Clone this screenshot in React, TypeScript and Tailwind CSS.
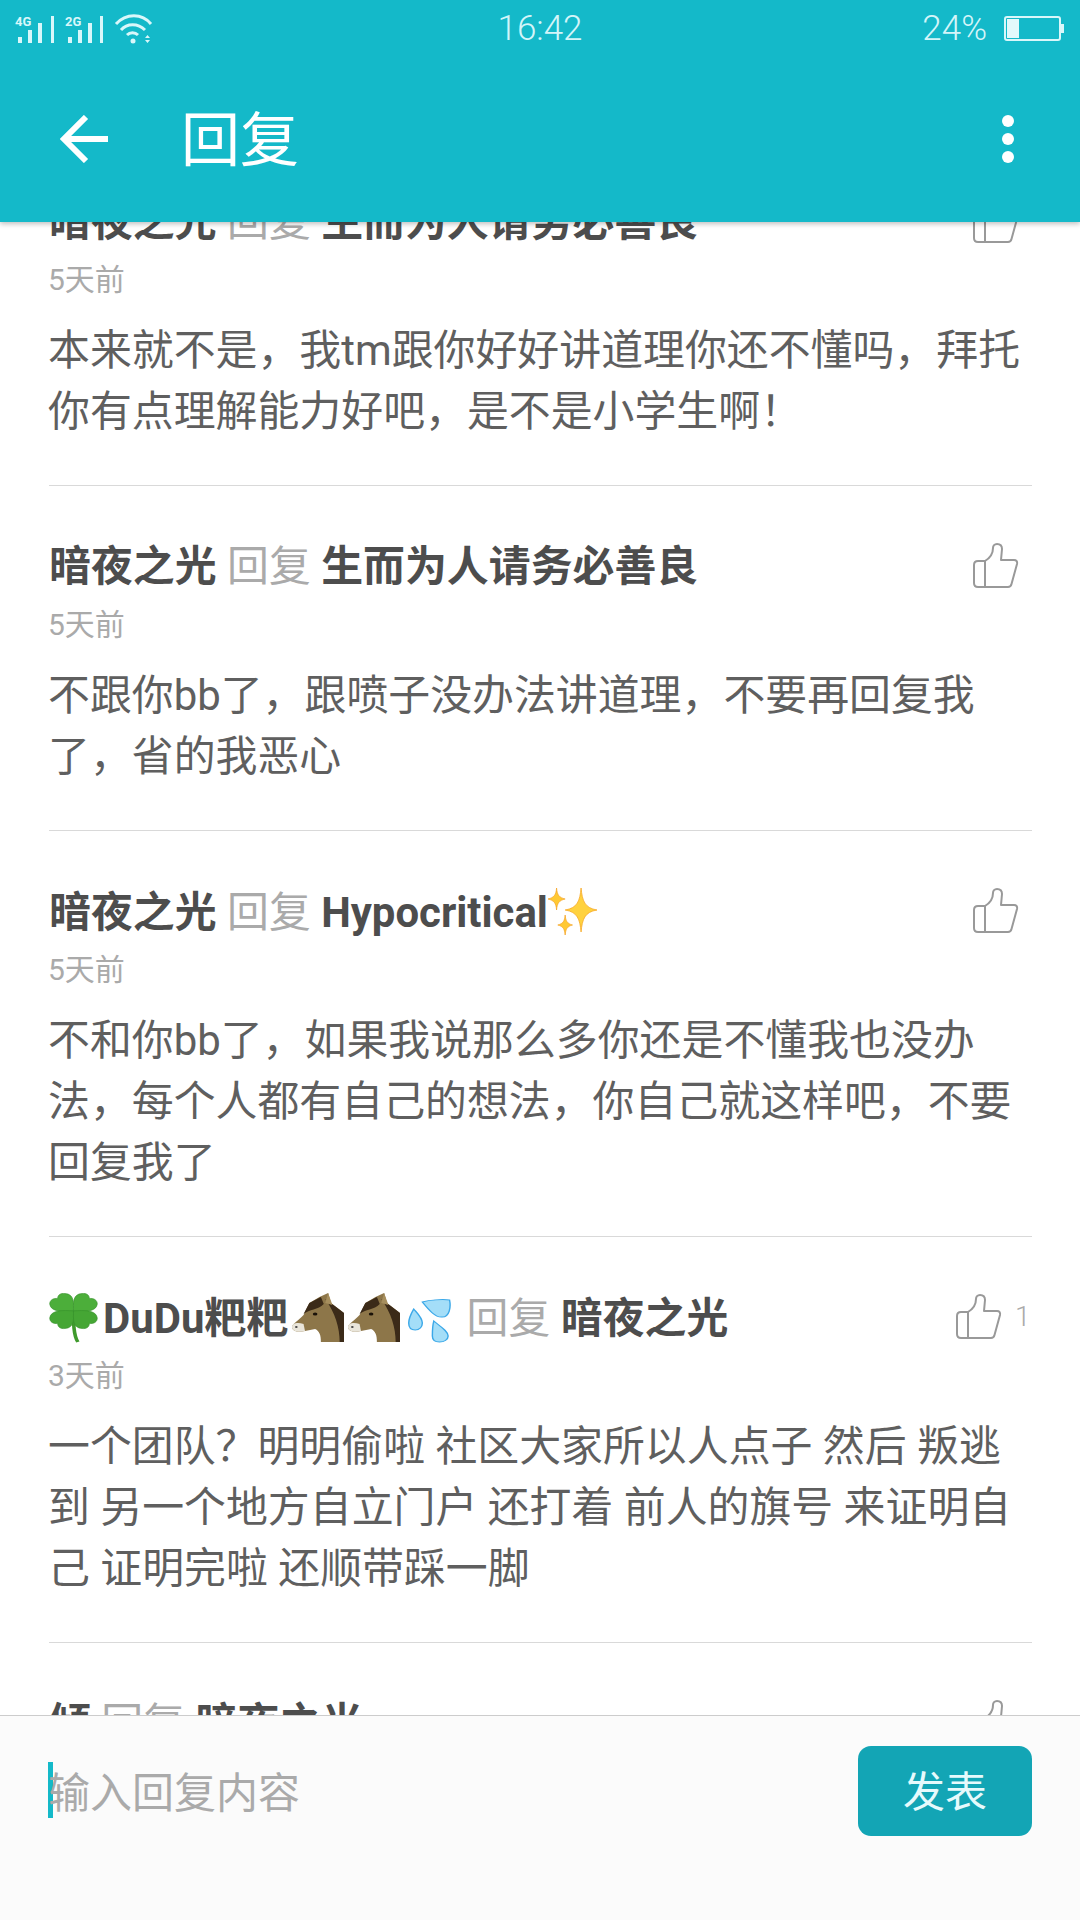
import React from 'react';

const ThumbIcon = () => (
  <svg width="46" height="46" viewBox="-1 -1 46 46" fill="none" stroke="#999999" strokeWidth="2" strokeLinejoin="round">
    <path d="M11 17H4C1.5 17 0 18.5 0 21V39C0 41.5 1.5 43 4 43H34C36 43 37 42 37.5 40L43 20C43.5 17.5 42.5 16 40 16H27L28 5C28 2 26 0 23 0C20.5 0 19 2 19 4C19 10 16 14 11 17Z" />
    <path d="M11 17V43" />
  </svg>
);

const Sparkles = () => (
  <svg width="49" height="48" viewBox="0 0 40 48" preserveAspectRatio="none" className="inline-block align-[-8px]">
    <path d="M27 1C28 14 30 21 40 23C30 25 28 32 27 45C26 32 24 25 14 23C24 21 26 14 27 1Z" fill="#ffd23f" stroke="#f7a823" strokeWidth="0.7" />
    <path d="M7 1C7.5 8 9 10.5 14 12C9 13.5 7.5 16 7 23C6.500 16 5 13.500 0 12C5 10.5 6.500 8 7 1Z" fill="#ffc933" stroke="#f59e1b" strokeWidth="0.6" />
    <path d="M14 28C14.500 34 15.500 36.500 20 38C15.500 39.500 14.500 42 14 48C13.500 42 12.500 39.500 8 38C12.500 36.500 13.500 34 14 28Z" fill="#ffc933" stroke="#f59e1b" strokeWidth="0.6" />
  </svg>
);

const leaf = 'M17 18C10 19 1 19 0.500 11C0.500 7 3 5 6 5.500C6 2 8 0 11 0.500C18 1 17 11 17 18Z';

const Clover = () => (
  <svg width="49" height="50" viewBox="0 0 34 50" preserveAspectRatio="none" className="mr-[5px] inline-block align-[-10px]">
    <path d="M17 18C17 30 17 42 20 49" stroke="#3f9a2c" strokeWidth="2.500" fill="none" />
    <path d={leaf} fill="#4cae3a" stroke="#37902a" strokeWidth="0.5" />
    <path d={leaf} fill="#4cae3a" stroke="#37902a" strokeWidth="0.5" transform="translate(34 0) scale(-1 1)" />
    <path d={leaf} fill="#45a634" stroke="#37902a" strokeWidth="0.5" transform="translate(0 36) scale(1 -1)" />
    <path d={leaf} fill="#45a634" stroke="#37902a" strokeWidth="0.5" transform="translate(34 36) scale(-1 -1)" />
  </svg>
);

const Horse = () => (
  <svg width="52" height="50" viewBox="0 0 36 50" preserveAspectRatio="none" className="ml-[4px] inline-block align-[-10px]">
    <path d="M19 4L25 0L27 10L36 20V49H20C20 42 19 38 16 36L9 38C4 40 0 38 0 34C0 31 5 27 8 22L12 10Z" fill="#8d7649" />
    <path d="M23 6L26 9L36 20V49H33C33 35 30 20 23 6Z" fill="#3b2a18" />
    <path d="M20 4L12 10L8 21C12 16 18 17 22 11Z" fill="#3b2a18" />
    <path d="M25 0L28 12L23 10Z" fill="#a68e5d" />
    <path d="M0 34C0 30 4 29 8 31L9 38C4 40 0 38 0 34Z" fill="#e9e5da" />
    <circle cx="16" cy="21" r="1.600" fill="#1a1208" />
    <circle cx="3" cy="34" r="0.900" fill="#444444" />
  </svg>
);

const Droplets = () => (
  <svg width="43" height="44" viewBox="0 0 30 44" preserveAspectRatio="none" className="mr-[5px] ml-[8px] inline-block align-[-10px]">
    <g fill="#a4def8" stroke="#3ba8e8" strokeWidth="1">
      <path d="M10 3C15 1 24 0 29 1C30 8 29 18 24 18C19 19 14 10 10 3Z" />
      <path d="M4 10C7 15 10 19 10 24C10 28 8 31 5 31C2 31 0.500 28 0.500 24C0.500 19 2 15 4 10Z" />
      <path d="M18 22C22 27 28 32 28 37C28 41 25 43 22 43C19 43 17 41 17 37C17 32 17 27 18 22Z" />
    </g>
  </svg>
);

interface CommentProps {
  name: React.ReactNode;
  target: React.ReactNode;
  time: string;
  body: string;
  likes?: number;
}

const Comment: React.FC<CommentProps> = ({ name, target, time, body, likes }) => (
  <div className="mx-[49px] w-[983px] border-b-[1.500px] border-[#d9d9d9] pt-[56px] pb-[43px]">
    <div className="flex h-[50px] items-center justify-between">
      <div className="whitespace-nowrap text-[41.900px] leading-[50px] font-bold text-[#4d4d4d]">
        {name} <span className="font-normal text-[#aaaaaa]">回复</span> {target}
      </div>
      <div className={likes ? 'mt-[-3px] flex items-center pr-[3px]' : 'mt-[-3px] flex items-center pr-[13px]'}>
        <ThumbIcon />
        {likes ? <span className="ml-[13px] w-[14px] text-[28px] font-light text-[#aaaaaa]">{likes}</span> : null}
      </div>
    </div>
    <div className="mt-[17px] ml-[-1px] text-[30px] leading-[32px] text-[#aaaaaa]">{time}</div>
    <p className="mt-[24px] ml-[-1px] text-[41.900px] leading-[61px] text-[#5f5f5f]">{body}</p>
  </div>
);

export default function App() {
  return (
    <div className="relative flex h-[1920px] w-[1080px] flex-col overflow-hidden bg-white font-['Roboto','Noto_Sans_CJK_SC',sans-serif]">
      <header className="relative z-10 h-[222px] shrink-0 bg-[#14b9c9] text-white shadow-[0_2px_5px_rgba(0,0,0,0.25)]">
        <div className="grid h-[56px] grid-cols-3 items-center text-[#d4f5f9]">
          <svg width="160" height="50" viewBox="0 0 160 50" fill="#d9f7fa">
            <text x="15" y="23" fontSize="13" fontWeight="700" fontFamily="Roboto">4G</text>
            <rect x="18" y="34" width="4" height="6" />
            <rect x="28" y="27" width="4" height="13" />
            <rect x="38" y="20" width="4" height="20" />
            <rect x="51" y="13" width="3" height="27" />
            <text x="65" y="23" fontSize="13" fontWeight="700" fontFamily="Roboto">2G</text>
            <rect x="68" y="34" width="4" height="6" />
            <rect x="78" y="27" width="4" height="13" />
            <rect x="88" y="20" width="4" height="20" />
            <rect x="100" y="13" width="3" height="27" />
            <g fill="none" stroke="#d9f7fa" strokeWidth="3">
              <path d="M116 21C126 10 142 10 151 21" />
              <path d="M121 27C127 20 138 20 145 27" />
              <path d="M127 32C130 29 135 29 138 32" />
            </g>
            <circle cx="133" cy="38" r="2.500" />
            <path d="M145 35L147.500 32L150 35ZM145 37L150 37L147.500 40Z" />
          </svg>
          <div className="text-center text-[35px] leading-none font-light">16:42</div>
          <div className="flex items-center justify-end pr-[16px]">
            <span className="text-[35px] leading-none font-light">24%</span>
            <div className="ml-[17px] flex h-[25px] w-[57px] rounded-[3px] border-2 border-[#d9f7fa] p-[1px]">
              <div className="h-full w-[12px] bg-[#e3f9fb]" />
            </div>
            <div className="h-[9px] w-[3px] bg-[#d9f7fa]" />
          </div>
        </div>
        <div className="flex h-[166px] items-center">
          <svg width="48" height="48" viewBox="0 0 48 48" fill="none" stroke="white" strokeWidth="6" className="ml-[60px]">
            <path d="M26 2L4 24L26 46" />
            <path d="M4 24H48" />
          </svg>
          <h1 className="ml-[73px] pt-[3px] text-[59px] leading-none font-normal">回复</h1>
          <div className="mr-[66px] ml-auto flex flex-col gap-[6px]">
            <div className="h-[12px] w-[12px] rounded-full bg-white" />
            <div className="h-[12px] w-[12px] rounded-full bg-white" />
            <div className="h-[12px] w-[12px] rounded-full bg-white" />
          </div>
        </div>
      </header>

      <main className="min-h-0 flex-1 overflow-hidden">
        <div className="mt-[-81px]">
          <Comment
            name="暗夜之光"
            target="生而为人请务必善良"
            time="5天前"
            body="本来就不是，我tm跟你好好讲道理你还不懂吗，拜托你有点理解能力好吧，是不是小学生啊！"
          />
          <Comment
            name="暗夜之光"
            target="生而为人请务必善良"
            time="5天前"
            body="不跟你bb了，跟喷子没办法讲道理，不要再回复我了，省的我恶心"
          />
          <Comment
            name="暗夜之光"
            target={<>Hypocritical<Sparkles /></>}
            time="5天前"
            body="不和你bb了，如果我说那么多你还是不懂我也没办法，每个人都有自己的想法，你自己就这样吧，不要回复我了"
          />
          <Comment
            name={<><Clover />DuDu粑粑<Horse /><Horse /><Droplets /></>}
            target="暗夜之光"
            time="3天前"
            likes={1}
            body="一个团队？明明偷啦 社区大家所以人点子 然后 叛逃到 另一个地方自立门户 还打着 前人的旗号 来证明自己 证明完啦 还顺带踩一脚"
          />
          <Comment name="倾" target="暗夜之光" time="3天前" body="" />
        </div>
      </main>

      <footer className="relative z-10 h-[205px] shrink-0 border-t-[1.500px] border-[#cccccc] bg-[#fbfbfb]">
        <div className="flex items-start justify-between pt-[30px] pr-[48px] pl-[48px]">
          <div className="mt-[16px] flex h-[56px] items-center">
            <div className="h-[56px] w-[5px] bg-[#14b9c9]" />
            <span className="ml-[-5px] pt-[6px] text-[42px] text-[#aaaaaa]">输入回复内容</span>
          </div>
          <button className="h-[90px] w-[174px] rounded-[13px] bg-[#13a5b5] pt-[3px] text-[42px] text-[#e6fafc]">发表</button>
        </div>
      </footer>
    </div>
  );
}
